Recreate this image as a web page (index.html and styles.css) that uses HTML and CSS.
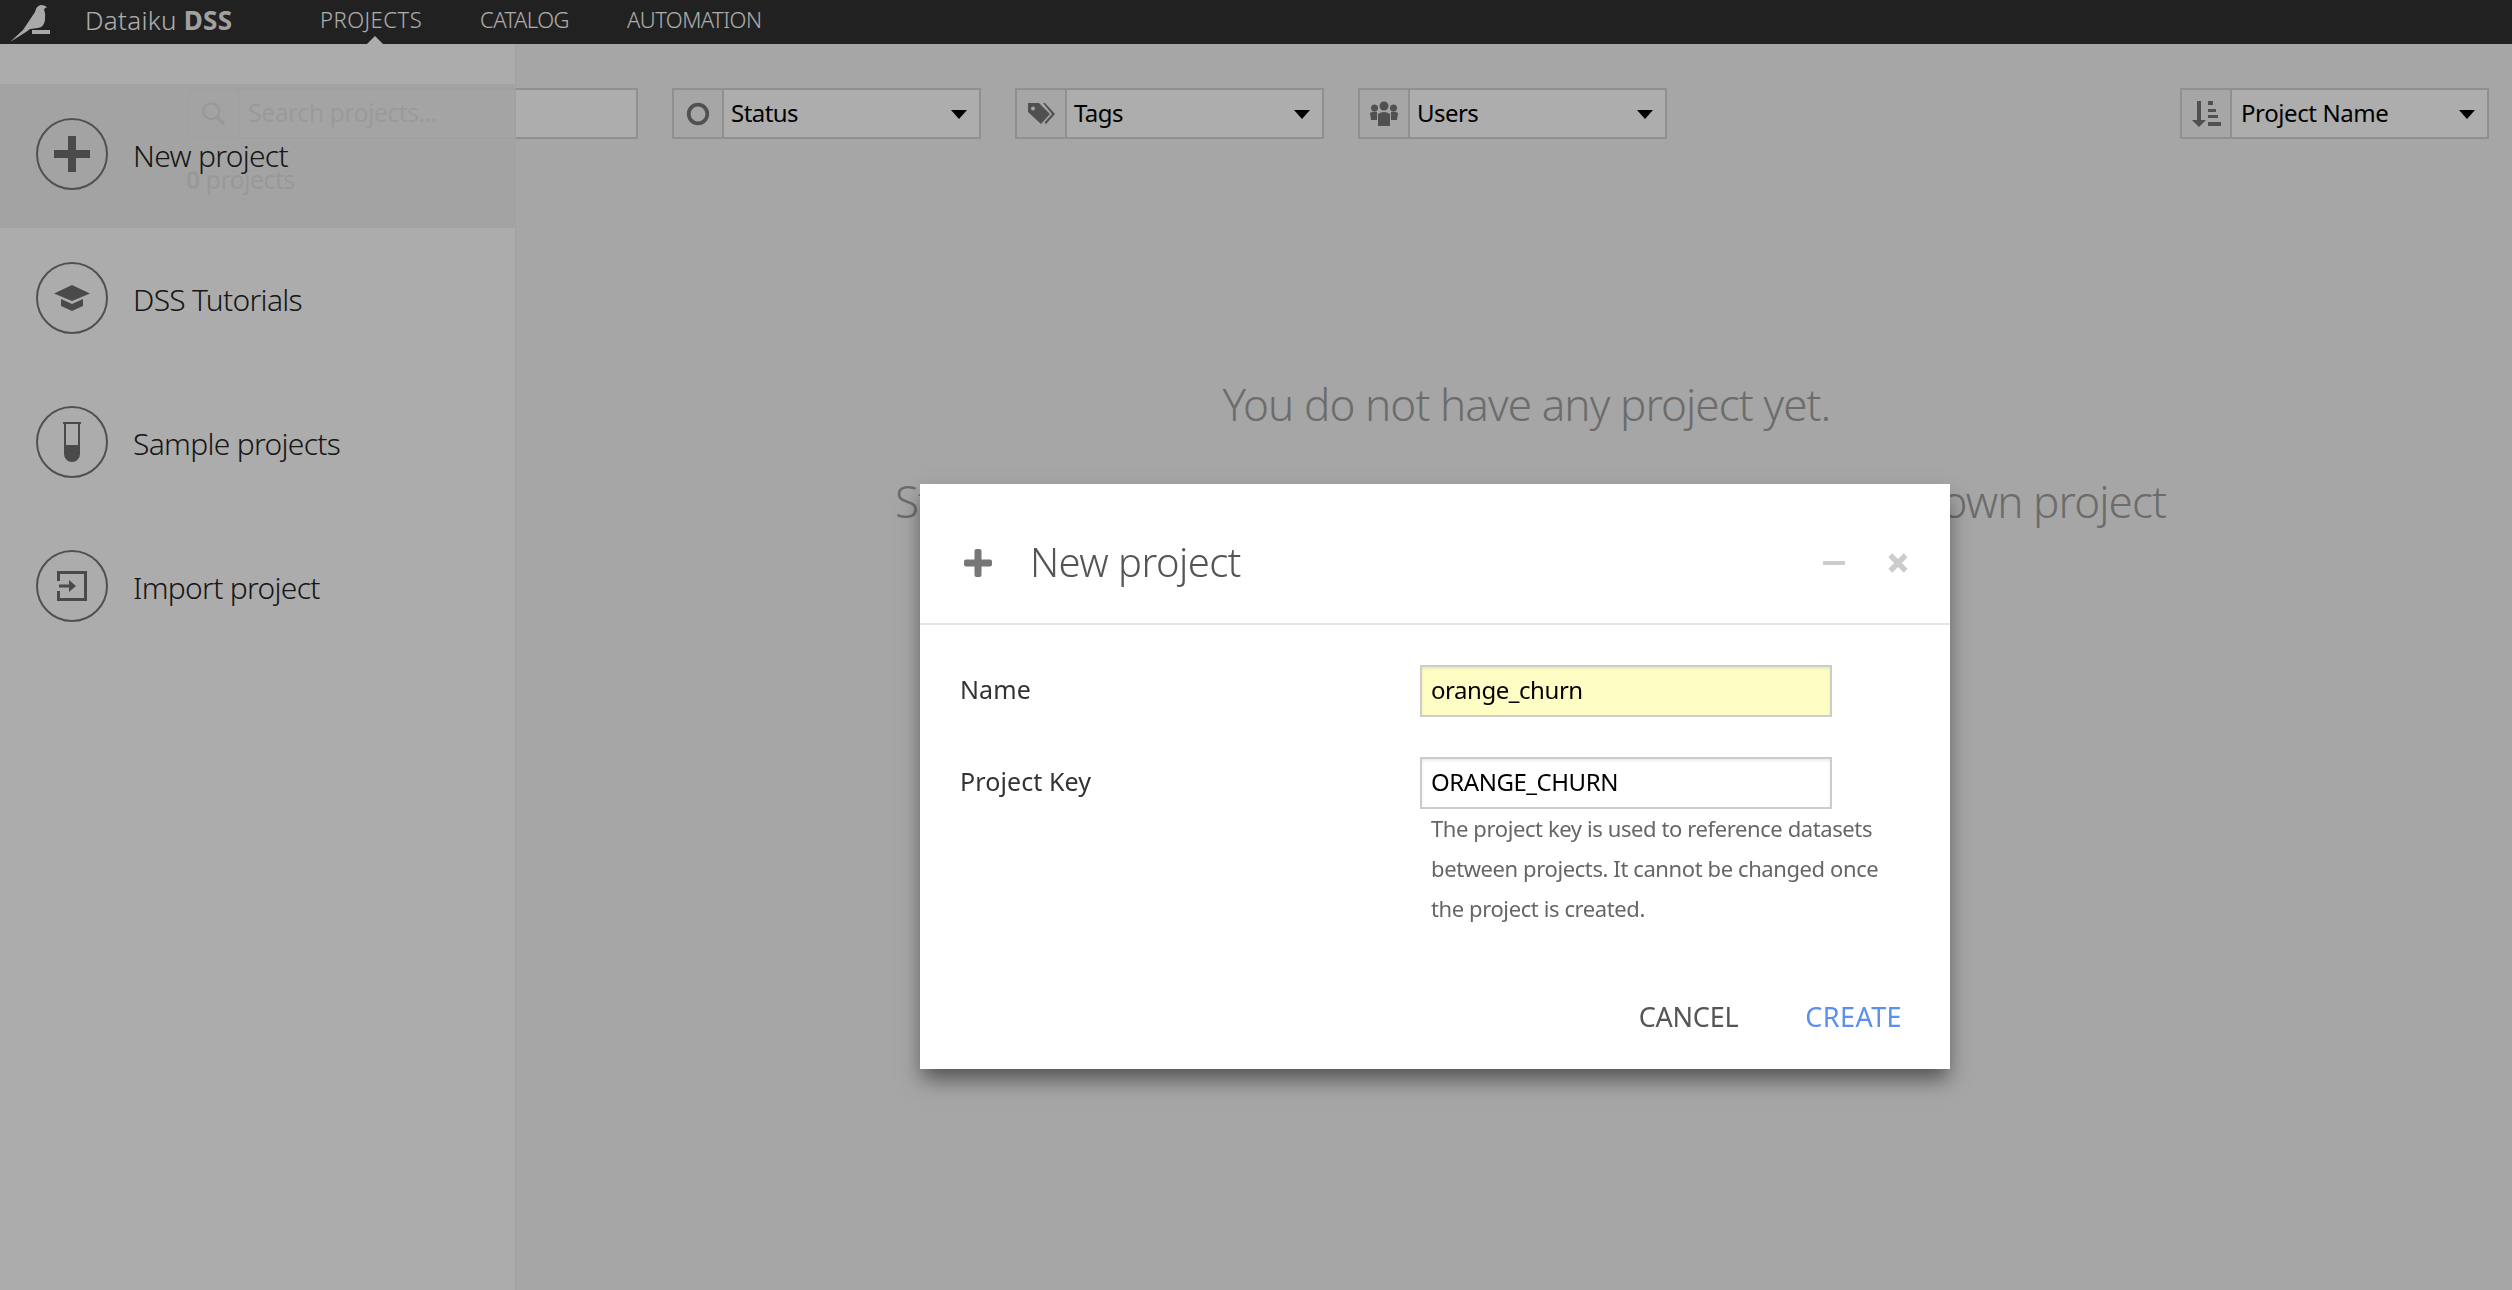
FILE: index.html
```html
<!DOCTYPE html>
<html lang="en">
<head>
<meta charset="utf-8">
<title>Dataiku DSS</title>
<link rel="stylesheet" href="styles.css">
</head>
<body>
<header class="topbar">
  <svg class="logo" viewBox="0 0 42 38"><path d="M0 37 L13 25 L25 7 Q26 1 31 0 Q34 0 37 2 L34 4 Q36 9 35 15 Q34 22 28 23 L20 24 L16 27 Z"/><rect x="22" y="25" width="18" height="4"/></svg>
  <div class="brand">Dataiku <b>DSS</b></div>
  <nav class="nav"><a class="nav-a">PROJECTS</a><a class="nav-b">CATALOG</a><a class="nav-c">AUTOMATION</a></nav>
</header>
<main class="page">
  <div class="filters">
    <div class="field search">
      <span class="addon"><svg viewBox="0 0 28 28" class="ico"><circle cx="11" cy="11" r="8.5" fill="none" stroke="currentColor" stroke-width="2.5"/><path d="M17 17l8 8" stroke="currentColor" stroke-width="4"/></svg></span>
      <span class="ph">Search projects...</span>
    </div>
    <div class="field"><span class="addon"><svg viewBox="0 0 28 28" class="ico"><circle cx="14" cy="14" r="10" fill="none" stroke="currentColor" stroke-width="4"/></svg></span><span class="label">Status</span><i class="caret"></i></div>
    <div class="field"><span class="addon"><svg viewBox="0 0 30 28" class="ico wide"><path d="M2 3h11l11 11-9 10L2 12Z M7 6.500a2 2 0 1 0 .01 0Z" fill-rule="evenodd"/><path d="M17 3h2l10 11-9 10-1.500-1.500L26 14Z"/></svg></span><span class="label">Tags</span><i class="caret"></i></div>
    <div class="field users"><span class="addon"><svg viewBox="0 0 30 28" class="ico wide"><circle cx="15" cy="6" r="4.500"/><circle cx="5.500" cy="8" r="3.500"/><circle cx="24.500" cy="8" r="3.500"/><path d="M9 14q6-4 12 0v12H9Z"/><path d="M1 13q3-2 7-1v8H2Z M29 13q-3-2-7-1v8h6Z"/></svg></span><span class="label">Users</span><i class="caret"></i></div>
    <div class="field sort"><span class="addon"><svg viewBox="0 0 30 28" class="ico wide"><path d="M6 1h4v19h5l-7 7-7-7h5Z"/><rect x="17" y="1" width="5" height="4"/><rect x="17" y="9" width="8" height="3"/><rect x="17" y="15" width="10" height="3"/><rect x="17" y="22" width="13" height="4"/></svg></span><span class="label">Project Name</span><i class="caret"></i></div>
  </div>
  <p class="count"><b>0</b> projects</p>
  <section class="empty">
    <p>You do not have any project yet.</p>
    <p class="second">Start with a tutorial, try a sample project or create your own project</p>
  </section>
</main>
<aside class="sidebar">
  <a class="row active"><span class="circle"><svg viewBox="0 0 36 36"><path d="M14 0h8v14h14v8H22v14h-8V22H0v-8h14Z"/></svg></span><span class="row-text">New project</span></a>
  <a class="row"><span class="circle"><svg viewBox="0 0 36 26" class="cap"><path d="M18 0 36 8.500 18 16 0 8.500Z"/><path d="M7 14l11 5 11-5v7l-11 5-11-5Z"/></svg></span><span class="row-text">DSS Tutorials</span></a>
  <a class="row"><span class="circle"><svg viewBox="0 0 18 41" class="tube"><path d="M0 0h18v2h-1v30a8 8 0 0 1-16 0V2H0Z M3 2v21h12V2Z" fill-rule="evenodd"/></svg></span><span class="row-text">Sample projects</span></a>
  <a class="row"><span class="circle"><svg viewBox="0 0 30 30" class="imp"><path d="M0 0h30v30H0v-10h3v7h24V3H3v7H0Z"/><path d="M2 13.500h10V9l7 6-7 6v-4.500H2Z"/></svg></span><span class="row-text">Import project</span></a>
</aside>
<div class="backdrop"></div>
<i class="nav-tip"></i>
<div class="modal">
  <div class="modal-head">
    <svg class="modal-plus" viewBox="0 0 28 28"><path d="M10.500 2q0-2 2-2h3q2 0 2 2v8.500H26q2 0 2 2v3q0 2-2 2h-8.500V26q0 2-2 2h-3q-2 0-2-2v-8.500H2q-2 0-2-2v-3q0-2 2-2h8.500Z"/></svg>
    <h2 class="modal-title">New project</h2>
    <div class="modal-tools"><i class="minus"></i><svg class="close" viewBox="0 0 20 20"><path d="M3 3l14 14M17 3 3 17"/></svg></div>
  </div>
  <div class="modal-body">
    <div class="form-row name-row"><label class="form-label">Name</label><div class="control"><input class="input filled" value="orange_churn"></div></div>
    <div class="form-row"><label class="form-label">Project Key</label><div class="control"><input class="input" value="ORANGE_CHURN"><p class="help">The project key is used to reference datasets<br>between projects. It cannot be changed once<br>the project is created.</p></div></div>
  </div>
  <div class="modal-foot"><a class="btn cancel">CANCEL</a><a class="btn create">CREATE</a></div>
</div>
</body>
</html>
```
FILE: styles.css
```css
* { box-sizing: border-box; }
html, body { margin: 0; height: 100%; overflow: hidden; }
body { font-family: "Noto Sans", sans-serif; background: #f5f5f5; color: #000; height: 1290px; }
p, h2 { margin: 0; }

.topbar { height: 44px; background: #323232; display: flex; align-items: center; position: relative; }
.logo { width: 42px; height: 38px; fill: #fafafa; margin: 3px 0 0 10px; flex: none; }
.brand { margin-left: 33px; font-size: 26px; font-weight: 300; color: #fff; letter-spacing: .3px; margin-top: -5px; white-space: nowrap; width: 235px; }
.brand b { font-weight: 700; color: #eee; }
.nav { display: flex; margin-top: -7px; font-size: 22px; font-weight: 300; color: #fff; letter-spacing: -.55px; }
.nav-a { width: 160px; letter-spacing: .5px; }
.nav-b { width: 147px; }

.page { position: relative; }
.filters { display: flex; padding: 44px 23px 0 188px; }
.field { width: 309px; height: 51px; border: 2px solid #d4d4d4; background: #fff; display: flex; align-items: center; margin-right: 34px; position: relative; flex: none; }
.field.search { width: 450px; }
.field.users { margin-right: 0; }
.field.sort { margin: 0 0 0 auto; }
.addon { width: 50px; height: 100%; flex: none; background: #f5f5f5; border-right: 2px solid #d4d4d4; display: flex; align-items: center; justify-content: center; color: #777; }
.ico { width: 26px; height: 26px; fill: currentColor; }
.ico.wide { width: 30px; height: 28px; }
.label { margin: -3px 0 0 7px; font-size: 24px; letter-spacing: -.55px; white-space: nowrap; }
.sort .label { margin-left: 9px; letter-spacing: -.4px; }
.ph { margin: -3px 0 0 8px; font-size: 25px; color: #888; letter-spacing: -.6px; }
.caret { position: absolute; right: 12px; top: 20px; border: 8px solid transparent; border-top: 9px solid #000; border-bottom: 0; }

.count { margin: 22px 0 0 186px; font-size: 25px; color: #777; letter-spacing: -.6px; line-height: 36px; }
.empty { text-align: center; font-size: 44px; font-weight: 300; color: #a0a0a0; letter-spacing: -.9px; margin: 177px 0 0 541px; line-height: 60px; }
.second { margin-top: 37px; padding-left: 8px; white-space: nowrap; }

.sidebar { position: absolute; top: 44px; left: 0; bottom: 0; width: 516px; padding-top: 40px; background: rgba(255, 255, 255, .88); border-right: 1px solid #eee; }
.row { display: flex; align-items: center; height: 144px; padding: 0 0 4px 36px; }
.row.active { background: rgba(0, 0, 0, .05); }
.circle { width: 72px; height: 72px; border: 2px solid #777; border-radius: 50%; display: flex; align-items: center; justify-content: center; flex: none; }
.circle svg { width: 36px; height: 36px; fill: #6e6e6e; }
.circle .cap { height: 26px; }
.circle .tube { width: 18px; height: 41px; }
.circle .imp { width: 30px; height: 30px; }
.row-text { margin-left: 25px; font-size: 30px; font-weight: 300; color: #222; letter-spacing: -.7px; padding-top: 3px; white-space: nowrap; }

.backdrop { position: fixed; inset: 0; background: rgba(0, 0, 0, .32); }
.nav-tip { position: absolute; left: 367px; top: 36px; border: 8px solid transparent; border-bottom: 8px solid #adadad; border-top: 0; }

.modal { position: absolute; left: 920px; top: 484px; width: 1030px; height: 585px; background: #fff; box-shadow: 0 12px 20px -2px rgba(0, 0, 0, .5); display: flex; flex-direction: column; }
.modal-head { height: 141px; border-bottom: 2px solid #e5e5e5; display: flex; align-items: center; padding: 18px 41px 0 44px; }
.modal-plus { width: 28px; height: 28px; fill: #777; flex: none; }
.modal-title { margin: -3px 0 0 38px; font-size: 40px; font-weight: 300; color: #555; letter-spacing: -.55px; }
.modal-tools { margin-left: auto; display: flex; align-items: center; gap: 42px; }
.minus { width: 22px; height: 4px; background: #ccc; }
.close { width: 22px; height: 22px; stroke: #ccc; stroke-width: 5; fill: none; }

.modal-body { padding: 40px 0 0 40px; }
.form-row { display: flex; }
.name-row { margin-bottom: 40px; }
.form-label { width: 460px; font-size: 25px; color: #333; line-height: 48px; letter-spacing: .1px; }
.control { width: 500px; }
.input { display: block; width: 412px; height: 52px; border: 2px solid #ccc; padding: 0 9px 3px; font: 24px "Noto Sans", sans-serif; letter-spacing: -.45px; background: #fff; color: #000; box-shadow: inset 0 2px 3px rgba(0, 0, 0, .08); outline: 0; }
.input.filled { background: #fdfdc4; }
.help { margin: -1px 0 0 11px; font-size: 22px; line-height: 40px; color: #666; letter-spacing: -.4px; white-space: nowrap; }

.modal-foot { margin-top: auto; padding: 0 48px 34px 0; display: flex; justify-content: flex-end; gap: 67px; font-size: 27px; letter-spacing: -.25px; line-height: 36px; }
.cancel { color: #555; }
.create { color: #5b8ff0; letter-spacing: .4px; }
```
